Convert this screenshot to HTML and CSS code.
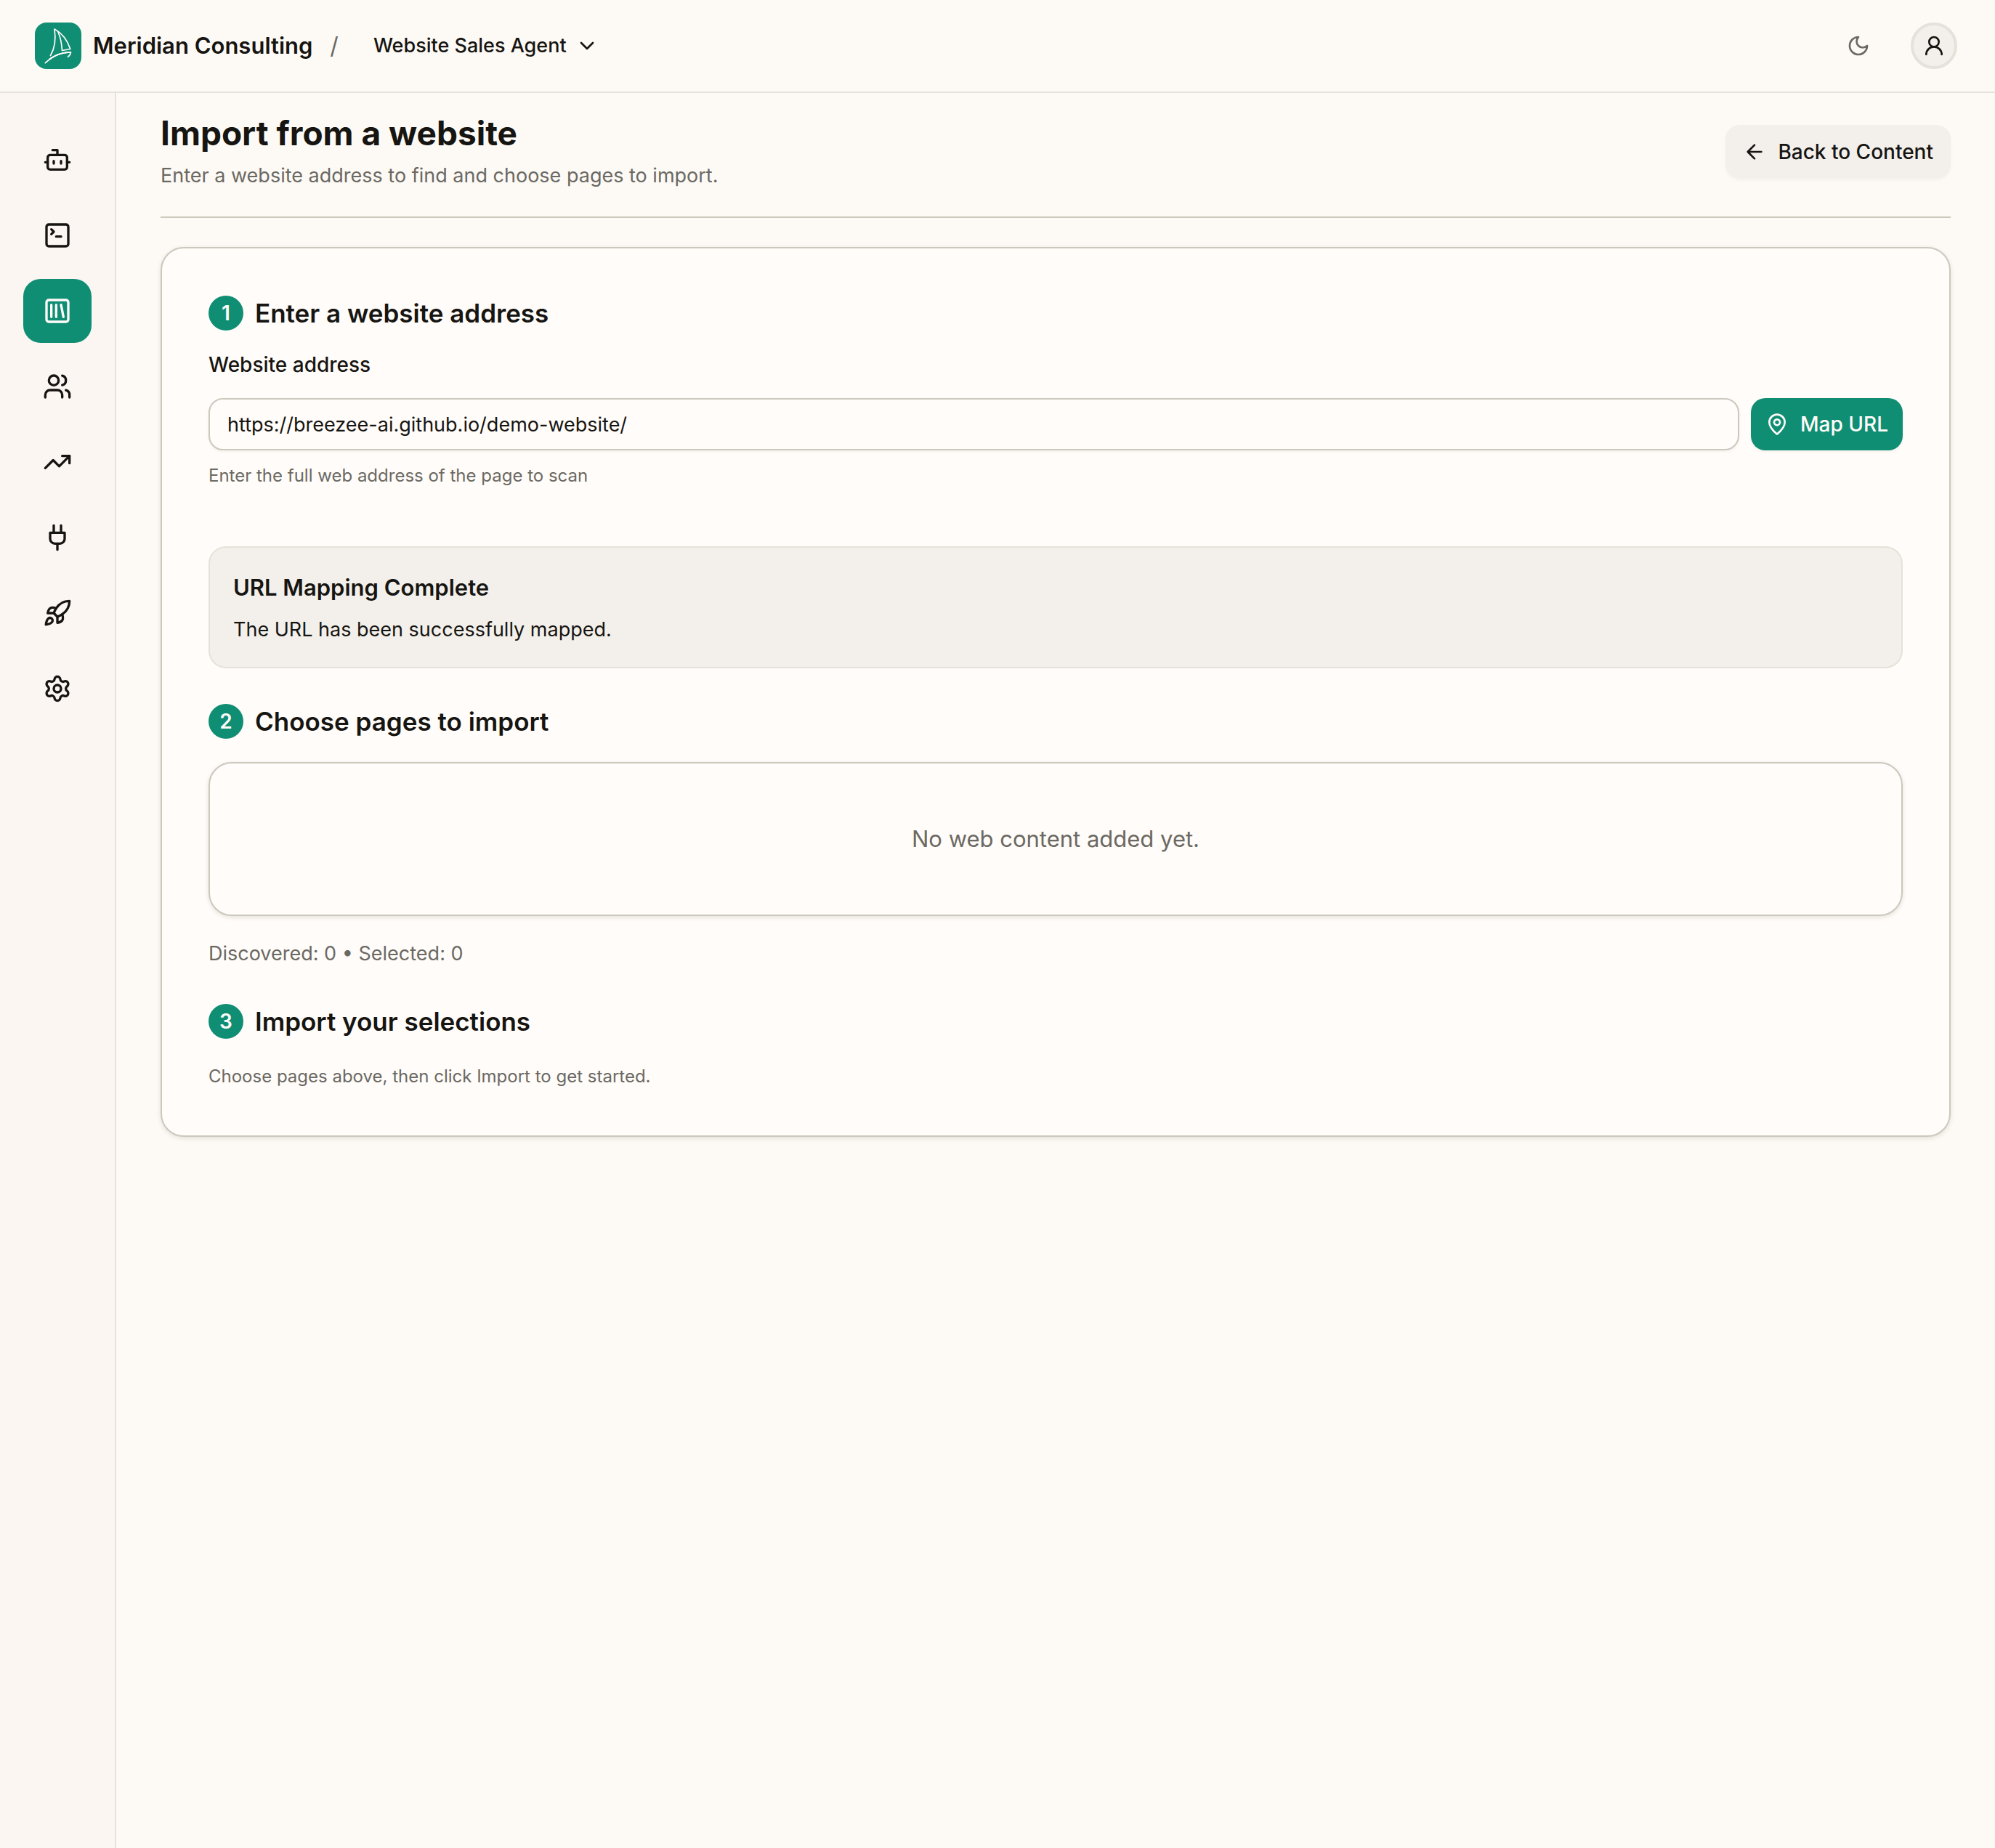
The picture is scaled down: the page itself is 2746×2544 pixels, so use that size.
FILE: index.html
```html
<!DOCTYPE html>
<html lang="en">
<head>
<meta charset="utf-8">
<meta name="viewport" content="width=device-width, initial-scale=1">
<title>Import from a website</title>
<link rel="stylesheet" href="styles.css">
</head>
<body>
<div class="app">
  <header class="topbar">
    <a class="brand" href="#">
      <svg class="brand-mark" viewBox="0 0 64 64" aria-hidden="true">
        <rect width="64" height="64" rx="16" fill="#0f8e74"/>
        <g fill="none" stroke="#fffcf9" stroke-width="1.7" stroke-linejoin="round" stroke-linecap="round">
          <path d="M21.5 45.5C26.5 37 29.5 26 27 9C37 14.500 44.500 23.500 48.800 36.500L37.500 38.500C37 30 35.500 21 32 13.500"/>
          <path d="M14.300 55.700C24 46.500 36 40.500 49.500 40.800C49 43.500 47.500 46 45.500 47.300"/>
          <path d="M20 50.500C28 44.800 37 41.800 46 41.200"/>
        </g>
      </svg>
      <span class="brand-name">Meridian Consulting</span>
    </a>
    <span class="slash">/</span>
    <button class="switcher" type="button">
      Website Sales Agent
      <svg class="icon" viewBox="0 0 24 24" aria-hidden="true"><path d="m6 9 6 6 6-6"/></svg>
    </button>
    <div class="topbar-actions">
      <button class="theme" type="button" aria-label="Toggle theme">
        <svg class="icon" viewBox="0 0 24 24" aria-hidden="true"><path d="M12 3a6 6 0 0 0 9 9 9 9 0 1 1-9-9Z"/></svg>
      </button>
      <button class="avatar" type="button" aria-label="Account">
        <svg class="icon" viewBox="0 0 24 24" aria-hidden="true"><circle cx="12" cy="8" r="5"/><path d="M20 21a8 8 0 0 0-16 0"/></svg>
      </button>
    </div>
  </header>

  <div class="body">
    <nav class="sidebar" aria-label="Main">
      <a class="nav-item" href="#" aria-label="Agent"><svg class="icon" viewBox="0 0 24 24"><path d="M12 8V4H8"/><rect width="16" height="12" x="4" y="8" rx="2"/><path d="M2 14h2M20 14h2M15 13v2M9 13v2"/></svg></a>
      <a class="nav-item" href="#" aria-label="Playground"><svg class="icon" viewBox="0 0 24 24"><path d="m7 11 2-2-2-2M11 13h4"/><rect width="18" height="18" x="3" y="3" rx="2"/></svg></a>
      <a class="nav-item nav-item-active" href="#" aria-label="Content" aria-current="page"><svg class="icon" viewBox="0 0 24 24"><rect width="18" height="18" x="3" y="3" rx="2"/><path d="M7 7v10M11 7v10M15 7l2 10"/></svg></a>
      <a class="nav-item" href="#" aria-label="Users"><svg class="icon" viewBox="0 0 24 24"><path d="M16 21v-2a4 4 0 0 0-4-4H6a4 4 0 0 0-4 4v2"/><circle cx="9" cy="7" r="4"/><path d="M22 21v-2a4 4 0 0 0-3-3.870M16 3.130a4 4 0 0 1 0 7.750"/></svg></a>
      <a class="nav-item" href="#" aria-label="Analytics"><svg class="icon" viewBox="0 0 24 24"><path d="M22 7 13.500 15.500 8.500 10.500 2 17"/><path d="M16 7h6v6"/></svg></a>
      <a class="nav-item" href="#" aria-label="Integrations"><svg class="icon" viewBox="0 0 24 24"><path d="M12 22v-5M9 8V2M15 8V2"/><path d="M18 8v5a4 4 0 0 1-4 4h-4a4 4 0 0 1-4-4V8Z"/></svg></a>
      <a class="nav-item" href="#" aria-label="Deploy"><svg class="icon" viewBox="0 0 24 24"><path d="M4.500 16.500c-1.500 1.260-2 5-2 5s3.740-.5 5-2c.71-.84.7-2.130-.09-2.910a2.180 2.180 0 0 0-2.910-.09z"/><path d="m12 15-3-3a22 22 0 0 1 2-3.950A12.880 12.880 0 0 1 22 2c0 2.720-.78 7.500-6 11a22.350 22.350 0 0 1-4 2z"/><path d="M9 12H4s.55-3.030 2-4c1.620-1.080 5 0 5 0"/><path d="M12 15v5s3.030-.55 4-2c1.080-1.620 0-5 0-5"/></svg></a>
      <a class="nav-item" href="#" aria-label="Settings"><svg class="icon" viewBox="0 0 24 24"><path d="M9.671 4.136a2.340 2.340 0 0 1 4.659 0 2.340 2.340 0 0 0 3.319 1.915 2.340 2.340 0 0 1 2.330 4.033 2.340 2.340 0 0 0 0 3.831 2.340 2.340 0 0 1-2.330 4.033 2.340 2.340 0 0 0-3.319 1.915 2.340 2.340 0 0 1-4.659 0 2.340 2.340 0 0 0-3.320-1.915 2.340 2.340 0 0 1-2.330-4.033 2.340 2.340 0 0 0 0-3.831A2.340 2.340 0 0 1 6.350 6.051a2.340 2.340 0 0 0 3.319-1.915"/><circle cx="12" cy="12" r="3"/></svg></a>
    </nav>

    <main class="main">
      <div class="page-head">
        <div class="page-titles">
          <h1 class="page-title">Import from a website</h1>
          <p class="page-sub">Enter a website address to find and choose pages to import.</p>
        </div>
        <button class="back" type="button">
          <svg class="icon" viewBox="0 0 24 24" aria-hidden="true"><path d="m12 19-7-7 7-7M19 12H5"/></svg>
          Back to Content
        </button>
      </div>

      <div class="card">
        <section>
          <h2 class="step"><span class="step-num">1</span>Enter a website address</h2>
          <label class="label" for="site-url">Website address</label>
          <div class="url-row">
            <input class="url-input" id="site-url" type="text" value="https://breezee-ai.github.io/demo-website/" aria-describedby="site-hint">
            <button class="map" type="button">
              <svg class="icon" viewBox="0 0 24 24" aria-hidden="true"><path d="M20 10c0 4.993-5.539 10.193-7.399 11.799a1 1 0 0 1-1.202 0C9.539 20.193 4 14.993 4 10a8 8 0 0 1 16 0"/><circle cx="12" cy="10" r="3"/></svg>
              Map URL
            </button>
          </div>
          <p class="hint hint-input" id="site-hint">Enter the full web address of the page to scan</p>
        </section>

        <div class="alert" role="status">
          <h3 class="alert-title">URL Mapping Complete</h3>
          <p class="alert-text">The URL has been successfully mapped.</p>
        </div>

        <section class="section">
          <h2 class="step"><span class="step-num">2</span>Choose pages to import</h2>
          <div class="empty">No web content added yet.</div>
          <p class="counts">Discovered: 0 • Selected: 0</p>
        </section>

        <section class="section">
          <h2 class="step"><span class="step-num">3</span>Import your selections</h2>
          <p class="hint hint-import">Choose pages above, then click Import to get started.</p>
        </section>
      </div>
    </main>
  </div>
</div>
</body>
</html>
```
FILE: styles.css
```css
:root {
  --bg: #fdfaf5;
  --sidebar: #fbf6f2;
  --card: #fffcf9;
  --muted: #f3f0eb;
  --line: #e5e2db;
  --line-strong: #cbc8be;
  --text: #161512;
  --text-muted: #6b6963;
  --green: #0f8e74;
}

* {
  box-sizing: border-box;
}

body,
h1,
h2,
h3,
p {
  margin: 0;
}

body {
  background: var(--bg);
  color: var(--text);
  font-family: Inter, "Liberation Sans", sans-serif;
  font-size: 27px;
  line-height: 40px;
}

button,
input {
  font: inherit;
  color: inherit;
}

button {
  display: flex;
  align-items: center;
  padding: 0;
  border: 0;
  background: none;
  font-weight: 500;
  white-space: nowrap;
}

a {
  color: inherit;
  text-decoration: none;
}

.icon {
  flex: none;
  display: block;
  width: 32px;
  height: 32px;
  fill: none;
  stroke: currentColor;
  stroke-width: 2;
  stroke-linecap: round;
  stroke-linejoin: round;
}

.app {
  display: flex;
  flex-direction: column;
  min-height: 100vh;
}

/* Top bar */

.topbar {
  display: flex;
  align-items: center;
  height: 128px;
  padding: 0 52px 0 48px;
  border-bottom: 2px solid var(--line);
}

.brand {
  display: flex;
  align-items: center;
  gap: 16px;
}

.brand-mark {
  display: block;
  width: 64px;
  height: 64px;
}

.brand-name {
  font-size: 31px;
  font-weight: 600;
}

.slash {
  margin: 0 48px 0 24px;
  color: var(--text-muted);
  font-size: 32px;
}

.switcher {
  gap: 12px;
}

.topbar-actions {
  display: flex;
  align-items: center;
  gap: 36px;
  margin-left: auto;
}

.theme {
  justify-content: center;
  width: 72px;
  height: 72px;
  color: var(--text-muted);
}

.avatar {
  justify-content: center;
  width: 64px;
  height: 64px;
  border: 4px solid var(--line);
  border-radius: 50%;
  background: var(--muted);
}

/* Sidebar */

.body {
  display: flex;
  flex: 1;
}

.sidebar {
  display: flex;
  flex: none;
  flex-direction: column;
  gap: 16px;
  width: 160px;
  padding: 48px 32px;
  border-right: 2px solid var(--line);
  background: var(--sidebar);
}

.nav-item {
  display: flex;
  align-items: center;
  justify-content: center;
  height: 88px;
  border-radius: 24px;
}

.nav-item .icon {
  width: 40px;
  height: 40px;
}

.nav-item-active {
  background: var(--green);
  color: var(--card);
}

/* Page */

.main {
  flex: 1;
  min-width: 0;
  padding: 28px 61px;
}

.page-head {
  display: flex;
  align-items: center;
  justify-content: space-between;
  margin-bottom: 40px;
  padding-bottom: 37px;
  border-bottom: 2px solid var(--line-strong);
}

.page-title {
  margin-bottom: 13px;
  font-size: 46px;
  font-weight: 700;
  line-height: 54px;
}

.page-sub {
  color: var(--text-muted);
  line-height: 38px;
}

.back {
  gap: 16px;
  height: 74px;
  padding: 0 24px;
  border-radius: 20px;
  background: var(--muted);
  box-shadow: 0 2px 4px rgba(40, 30, 10, 0.04);
  font-size: 28px;
}

.card {
  padding: 64px;
  border: 2px solid var(--line-strong);
  border-radius: 32px;
  background: var(--card);
  box-shadow: 0 2px 6px rgba(40, 30, 10, 0.12);
}

.step {
  display: flex;
  align-items: center;
  gap: 16px;
  font-size: 35px;
  font-weight: 600;
  line-height: 50px;
}

.step-num {
  display: flex;
  align-items: center;
  justify-content: center;
  width: 48px;
  height: 48px;
  border-radius: 50%;
  background: var(--green);
  color: var(--card);
  font-size: 28px;
  line-height: 40px;
}

.label {
  display: block;
  margin: 26px 0;
  font-size: 28px;
  font-weight: 500;
}

.url-row {
  display: flex;
  gap: 16px;
}

.url-input {
  flex: 1;
  min-width: 0;
  height: 72px;
  padding: 0 24px;
  border: 2px solid var(--line-strong);
  border-radius: 20px;
  background: var(--card);
  box-shadow: 0 2px 4px rgba(40, 30, 10, 0.05);
}

.map {
  gap: 16px;
  height: 72px;
  padding: 0 20px;
  border-radius: 20px;
  background: var(--green);
  color: var(--card);
  box-shadow: 0 2px 4px rgba(40, 30, 10, 0.05);
  font-size: 28px;
}

.hint {
  color: var(--text-muted);
  font-size: 24px;
  line-height: 34px;
}

.hint-input {
  margin: 18px 0 80px;
}

.hint-import {
  margin-top: 34px;
}

.alert {
  padding: 32px 32px 31px;
  border: 2px solid var(--line);
  border-radius: 24px;
  background: var(--muted);
}

.alert-title {
  margin-bottom: 15px;
  font-size: 31px;
  font-weight: 600;
  line-height: 46px;
}

.section {
  margin-top: 48px;
}

.empty {
  display: flex;
  align-items: center;
  justify-content: center;
  height: 212px;
  margin: 31px 0 32px;
  border: 2px solid var(--line-strong);
  border-radius: 32px;
  background: var(--card);
  box-shadow: 0 2px 6px rgba(40, 30, 10, 0.12);
  color: var(--text-muted);
  font-size: 31px;
}

.counts {
  color: var(--text-muted);
}
```
